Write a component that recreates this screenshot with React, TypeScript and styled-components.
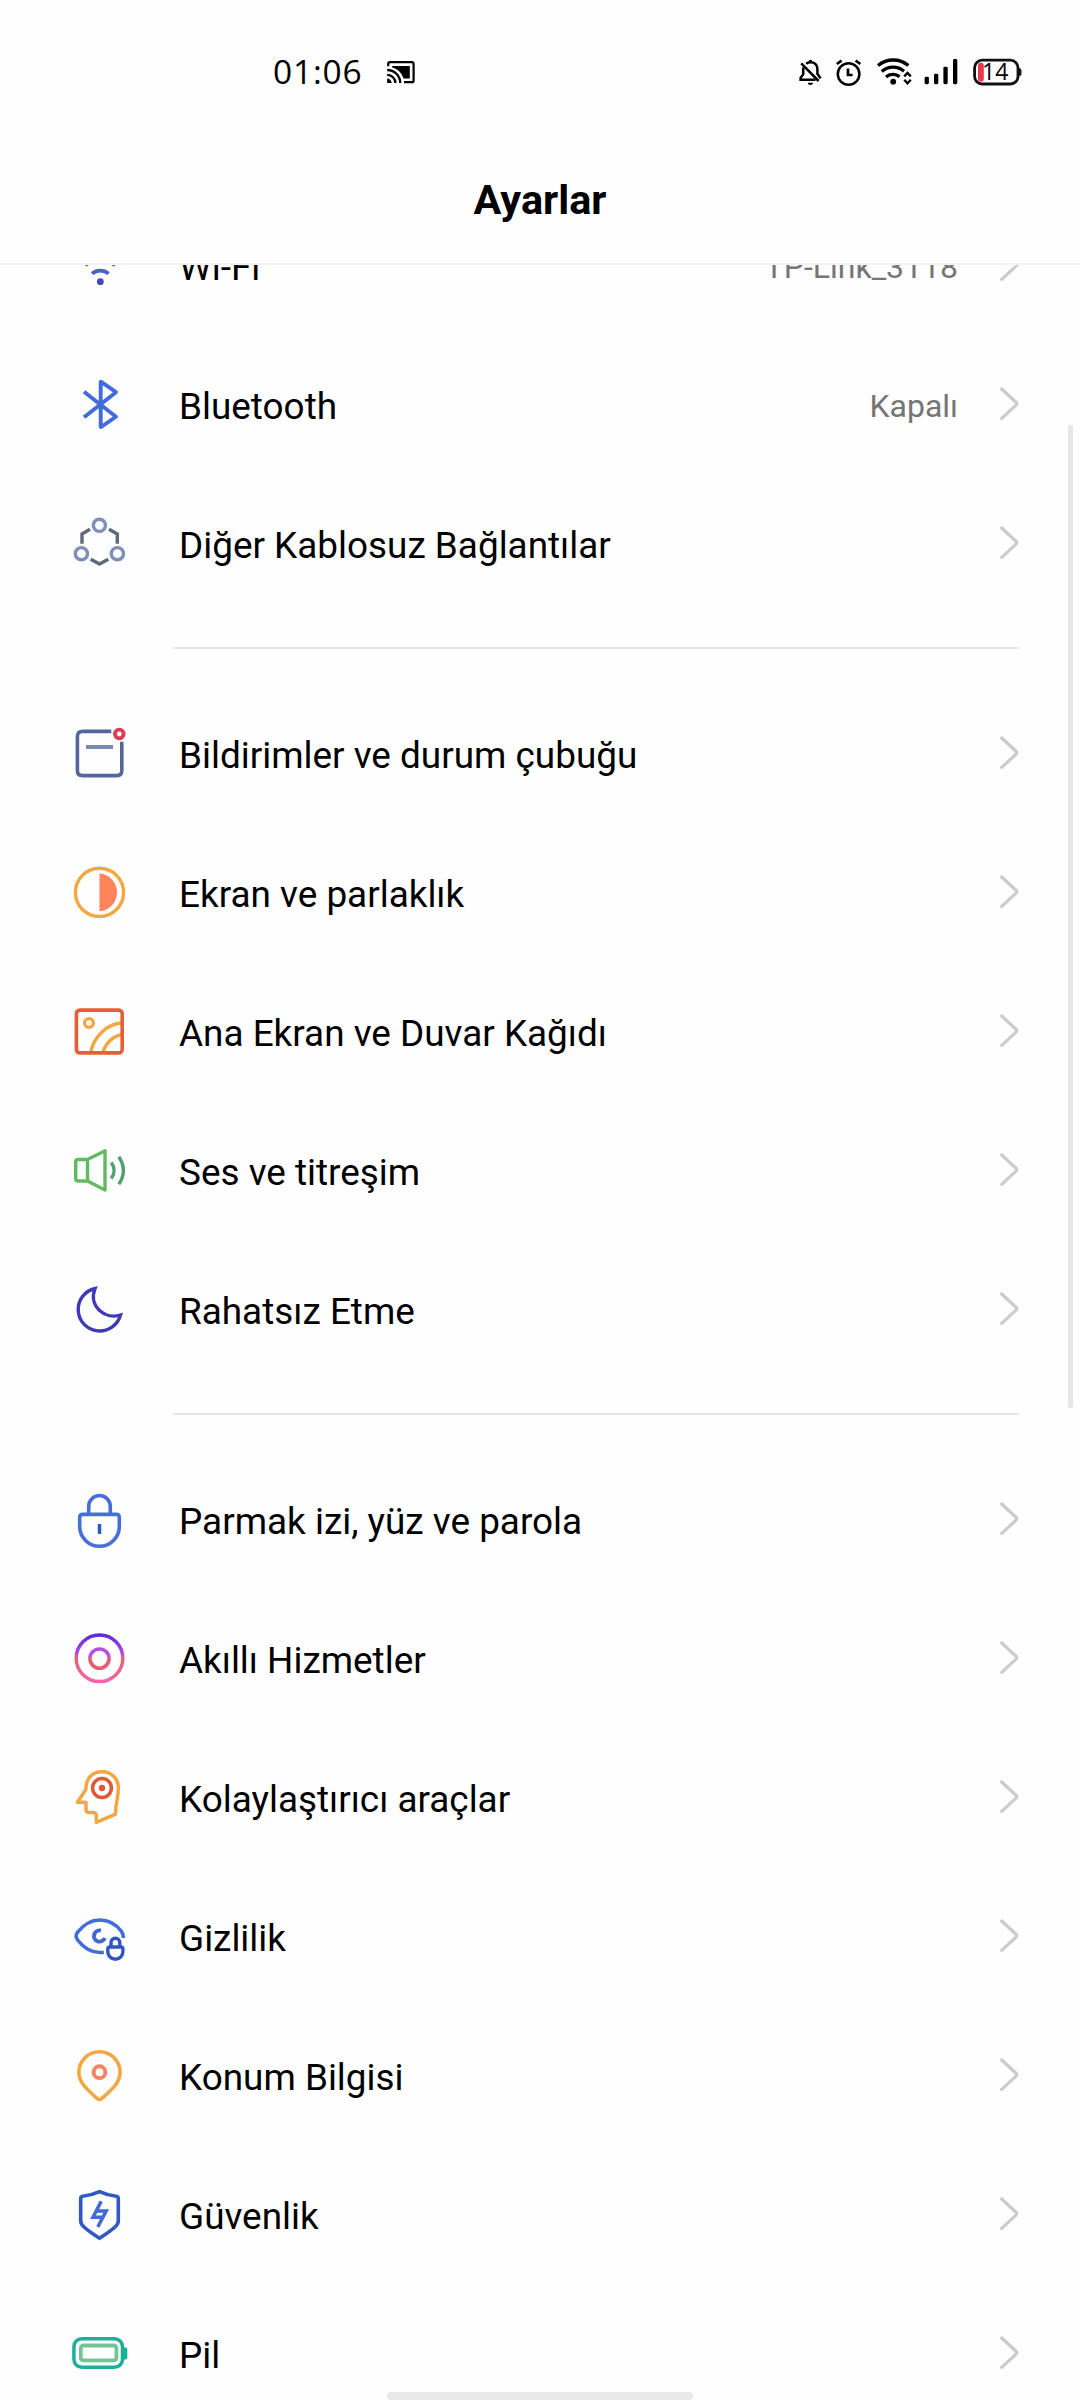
import React from "react";
import styled, { createGlobalStyle } from "styled-components";

const GlobalStyle = createGlobalStyle`
  html, body { margin: 0; padding: 0; background: #fefefe; }
  * { box-sizing: border-box; }
`;

const Screen = styled.div`
  position: relative;
  display: flex;
  flex-direction: column;
  width: 1080px;
  height: 2400px;
  overflow: hidden;
  background: #fefefe;
  color: #000;
  font-family: Roboto, "Noto Sans", sans-serif;
`;

const StatusBar = styled.div`
  flex: none;
  display: flex;
  align-items: center;
  height: 144px;
  padding: 0 58px 0 273px;
`;

const Clock = styled.div`
  width: 113px;
  padding-bottom: 2px;
  font-family: "Open Sans", "Noto Sans", sans-serif;
  font-size: 33.5px;
  letter-spacing: 0.8px;
  line-height: 40px;
`;

const StatusIcons = styled.div`
  display: flex;
  align-items: center;
  margin-left: auto;
`;

const StatusSvg = styled.svg<{ $gap?: number }>`
  display: block;
  flex: none;
  overflow: visible;
  margin-left: ${(p) => p.$gap ?? 0}px;
`;

const TitleBar = styled.header`
  flex: none;
  display: flex;
  justify-content: center;
  height: 121px;
  padding-top: 32px;
  border-bottom: 2px solid #f2f2f2;
`;

const Title = styled.h1`
  margin: 0;
  font-size: 41.4px;
  font-weight: 700;
  line-height: 49px;
`;

const Viewport = styled.main`
  flex: 1;
  min-height: 0;
  overflow: hidden;
`;

const List = styled.div`
  margin-top: -69px;
`;

const Row = styled.div`
  display: flex;
  align-items: center;
  height: 139px;
  padding: 0 61px 0 60px;
`;

const IconSvg = styled.svg`
  display: block;
  flex: none;
  width: 80px;
  height: 80px;
  margin: 0 39px 1px 0;
`;

const Label = styled.div`
  flex: 1;
  padding-top: 4px;
  font-size: 36.9px;
  line-height: 45px;
  white-space: nowrap;
`;

const Value = styled.div`
  padding-top: 2px;
  margin-right: 41px;
  color: #757575;
  font-size: 32px;
  line-height: 38px;
  white-space: nowrap;
`;

const ChevronSvg = styled.svg`
  display: block;
  flex: none;
  margin-bottom: 1px;
`;

const Divider = styled.hr`
  height: 2px;
  margin: 34px 61px 35px 173px;
  border: 0;
  background: #e5e5e5;
`;

const ScrollThumb = styled.div`
  position: absolute;
  top: 425px;
  right: 7px;
  width: 5px;
  height: 983px;
  border-radius: 2px;
  background: #e6e6e6;
`;

const HomeBar = styled.div`
  position: absolute;
  bottom: 0;
  left: 387px;
  width: 306px;
  height: 8px;
  border-radius: 4px;
  background: #e9e9e9;
`;

const Chevron = () => (
  <ChevronSvg width="20" height="40" viewBox="0 0 20 40" fill="none">
    <path d="M1.6 4 L17 18.2 Q18.4 19.7 17 21.2 L1.6 35.4" stroke="#cbcbcb" strokeWidth="3.2" />
  </ChevronSvg>
);

const icons: Record<string, React.ReactNode> = {
  wifi: (
    <>
      <path d="M18 31.5 A32 32 0 0 1 62 31.5" stroke="#4169dc" strokeWidth="3.4" />
      <path d="M25.5 40.5 A21.5 21.5 0 0 1 54.8 40.5" stroke="#4560d4" strokeWidth="3.4" />
      <path d="M32 48.6 A13 13 0 0 1 48.6 48.6" stroke="#4a5fd2" strokeWidth="3.8" />
      <circle cx="40.3" cy="56.7" r="3.4" fill="#4a45b8" />
    </>
  ),
  bluetooth: (
    <path
      d="M24 27.7 L56 52.7 L41.2 63 Q40.7 63.2 40.7 62.5 V18.3 Q40.7 17.6 41.2 17.9 L56 28.2 L24 53.3"
      stroke="#426bdd"
      strokeWidth="3.9"
      strokeLinejoin="round"
    />
  ),
  wireless: (
    <>
      <path
        d="M22 40.7 V31 L30 26.3 M49 26.3 L57.3 31 V40.7 M30.7 56.3 L39.5 61 L48.3 56.3"
        stroke="#5f6b78"
        strokeWidth="3.4"
      />
      <g stroke="#7e8eb8" strokeWidth="3.4">
        <circle cx="39.4" cy="22.3" r="6.1" />
        <circle cx="21.4" cy="50.7" r="6.1" />
        <circle cx="57.4" cy="50.7" r="6.1" />
      </g>
    </>
  ),
  notifications: (
    <>
      <path
        d="M51.3 18.4 H22.5 Q17.4 18.4 17.4 23.4 V57.5 Q17.4 62.6 22.5 62.6 H56.8 Q61.8 62.6 61.8 57.5 V28.7"
        stroke="#56669c"
        strokeWidth="3.6"
      />
      <path d="M26 34 H53" stroke="#7b89b6" strokeWidth="4" />
      <circle cx="59.3" cy="21" r="4.3" stroke="#de3c52" strokeWidth="3.8" />
    </>
  ),
  display: (
    <>
      <circle cx="39.5" cy="40.4" r="24.1" stroke="#f3a741" strokeWidth="3.4" />
      <path d="M39.5 21.6 A18.9 18.9 0 0 1 39.5 59.3 Z" fill="#ff845b" />
    </>
  ),
  wallpaper: (
    <>
      <path d="M30.6 62 C33.5 45.5 47 33 62 31.8 M42.6 62 C45.5 53 52 45.5 62 43.5" stroke="#f3a741" strokeWidth="3.4" />
      <circle cx="29" cy="32" r="4.4" stroke="#f3a741" strokeWidth="3.4" />
      <rect x="16.4" y="19.1" width="45.8" height="42.8" rx="3.5" stroke="#e65e34" strokeWidth="3.6" />
    </>
  ),
  sound: (
    <>
      <path
        d="M27.5 29.5 H18.2 Q15.7 29.5 15.7 32 V48.5 Q15.7 51 18.2 51 H27.5 Z L45 20.8 V60 L27.5 51"
        stroke="#61ba62"
        strokeWidth="3.4"
        strokeLinejoin="round"
      />
      <path d="M51.3 32.5 Q57 40.5 51.3 48.5 M58.8 26.7 Q68 40.5 58.8 54.3" stroke="#52a06f" strokeWidth="3.4" />
    </>
  ),
  moon: (
    <path
      d="M35 19.5 A21.5 21.5 0 1 0 60.5 46 C45 51 28 37 35 19.5 Z"
      stroke="#3f38bb"
      strokeWidth="3.4"
    />
  ),
  lock: (
    <>
      <g stroke="#456fd9" strokeWidth="3.6">
        <path d="M28.7 35 V27.3 A10.8 10.8 0 0 1 50.3 27.3 V35" />
        <path d="M22.7 35.4 H56.3 Q59.3 35.4 59.3 38.4 V47.4 A19.8 19.8 0 0 1 19.7 47.4 V38.4 Q19.7 35.4 22.7 35.4 Z" />
      </g>
      <path d="M39.5 45 V55" stroke="#2f58c0" strokeWidth="3.5" />
    </>
  ),
  smart: (
    <>
      <defs>
        <linearGradient id="smartOuter" gradientUnits="userSpaceOnUse" x1="0" y1="15" x2="0" y2="66">
          <stop offset="0" stopColor="#5428d6" />
          <stop offset="0.46" stopColor="#c54cec" />
          <stop offset="0.46" stopColor="#e2606f" />
          <stop offset="1" stopColor="#f367ae" />
        </linearGradient>
        <linearGradient id="smartInner" gradientUnits="userSpaceOnUse" x1="0" y1="29" x2="0" y2="52">
          <stop offset="0" stopColor="#b24ede" />
          <stop offset="0.42" stopColor="#c24fe6" />
          <stop offset="0.42" stopColor="#e2606f" />
          <stop offset="1" stopColor="#e2606f" />
        </linearGradient>
      </defs>
      <circle cx="39.5" cy="40.3" r="23.3" stroke="url(#smartOuter)" strokeWidth="3.5" />
      <circle cx="39.5" cy="40.6" r="9.6" stroke="url(#smartInner)" strokeWidth="3.6" />
    </>
  ),
  head: (
    <>
      <path
        d="M17.4 45.3 L25.3 33.5 Q26 32.3 26 30.8 C26 21.5 32.5 14.8 42 14.8 C51.8 14.8 58.4 21.8 58.4 31 C58.4 41 55.5 45 55.5 57.2 L36.3 65.4 V58.8 Q36.3 55.4 33 55.4 H29 Q26 55.4 26 52.4 V45.3 Z"
        stroke="#f3a741"
        strokeWidth="3.5"
        strokeLinejoin="round"
      />
      <circle cx="42" cy="31" r="9.4" stroke="#dd5b34" strokeWidth="3.5" />
      <circle cx="42" cy="31" r="3.2" fill="#dd5b34" />
    </>
  ),
  privacy: (
    <>
      <path
        d="M43.8 56.3 C33 57.6 24.5 53 17.6 44 Q14.6 40 17.6 36.2 C24 28.2 31 24 39.5 24 C49 24 56.5 28.5 61.5 35.5 Q63.4 38.3 63.4 42"
        stroke="#426bdd"
        strokeWidth="3.6"
      />
      <path d="M41 34.6 A5.6 5.6 0 1 0 44.8 42" stroke="#3f66d4" strokeWidth="3.9" />
      <g stroke="#3253c6" strokeWidth="3.4">
        <path d="M51 50.5 V46.6 A4.4 4.4 0 0 1 59.8 46.6 V50.5" />
        <path d="M49.8 51 H60.9 Q62.9 51 62.9 53 V55.7 A7.5 7.5 0 0 1 47.8 55.7 V53 Q47.8 51 49.8 51 Z" />
      </g>
    </>
  ),
  location: (
    <>
      <path
        d="M18.9 37.3 A20.6 20.6 0 0 1 60.1 37.3 C60.1 47.5 53 53.5 42 63.4 Q39.5 65.6 37 63.4 C26 53.5 18.9 47.5 18.9 37.3 Z"
        stroke="#f3a741"
        strokeWidth="3.6"
      />
      <circle cx="39.5" cy="37.2" r="5.9" stroke="#f4835f" strokeWidth="3.9" />
    </>
  ),
  security: (
    <>
      <path
        d="M39.5 17.7 Q47.5 21.5 56.3 22.2 Q58.3 22.6 58.3 24.6 V46.6 Q58.3 50 55.5 52.5 Q50.5 57.3 39.5 64.2 Q28.5 57.3 23.5 52.5 Q20.7 50 20.7 46.6 V24.6 Q20.7 22.6 22.7 22.2 Q31.5 21.5 39.5 17.7 Z"
        stroke="#3059c3"
        strokeWidth="3.6"
      />
      <path d="M41.2 27.4 L33 43.2 H43 M37.8 53 L46.2 36.9 H36.5" stroke="#4169d8" strokeWidth="3.5" />
    </>
  ),
  battery: (
    <>
      <rect x="62.5" y="34.4" width="4.8" height="12" rx="1.6" fill="#18b096" />
      <rect x="13.9" y="25.7" width="48.6" height="28.6" rx="8" stroke="#1bb099" strokeWidth="3.5" />
      <rect x="20.8" y="32.5" width="35.6" height="14.8" rx="2.6" stroke="#72c494" strokeWidth="3.8" />
    </>
  ),
};

type Item = { icon: string; label: string; value?: string };

const groups: Item[][] = [
  [
    { icon: "wifi", label: "Wi-Fi", value: "TP-Link_3118" },
    { icon: "bluetooth", label: "Bluetooth", value: "Kapalı" },
    { icon: "wireless", label: "Diğer Kablosuz Bağlantılar" },
  ],
  [
    { icon: "notifications", label: "Bildirimler ve durum çubuğu" },
    { icon: "display", label: "Ekran ve parlaklık" },
    { icon: "wallpaper", label: "Ana Ekran ve Duvar Kağıdı" },
    { icon: "sound", label: "Ses ve titreşim" },
    { icon: "moon", label: "Rahatsız Etme" },
  ],
  [
    { icon: "lock", label: "Parmak izi, yüz ve parola" },
    { icon: "smart", label: "Akıllı Hizmetler" },
    { icon: "head", label: "Kolaylaştırıcı araçlar" },
    { icon: "privacy", label: "Gizlilik" },
    { icon: "location", label: "Konum Bilgisi" },
    { icon: "security", label: "Güvenlik" },
    { icon: "battery", label: "Pil" },
  ],
];

const SettingRow = ({ icon, label, value }: Item) => (
  <Row>
    <IconSvg viewBox="0 0 80 80" fill="none">
      {icons[icon]}
    </IconSvg>
    <Label>{label}</Label>
    {value && <Value>{value}</Value>}
    <Chevron />
  </Row>
);

const CastIcon = () => (
  <StatusSvg width="30" height="30" viewBox="0 0 30 30" fill="none" stroke="#000">
    <path d="M2.2 9.3 V7 Q2.2 5.2 4 5.2 H25.8 Q27.6 5.2 27.6 7 V23.4 Q27.6 25.2 25.8 25.2 H18" strokeWidth="2.2" />
    <path d="M6.2 9 H23.8 V21.4 H17.6 Q14.5 12.6 6.2 10.6 Z" fill="#000" stroke="none" />
    <path d="M1.2 13 A13 13 0 0 1 14.2 26 M1.2 17.8 A8.2 8.2 0 0 1 9.4 26" strokeWidth="2.3" />
    <path d="M1.2 21.6 A4.5 4.5 0 0 1 5.7 26 H1.2 Z" fill="#000" stroke="none" />
  </StatusSvg>
);

const MutedBellIcon = () => (
  <StatusSvg width="25" height="30" viewBox="0 0 25 30" fill="none" stroke="#000">
    <path d="M8.2 6.8 Q10 5.2 12.4 5.2 C16.8 5.2 19.4 8.2 19.4 12.2 V16.8 L22.6 21.4" strokeWidth="2.5" />
    <path d="M5.4 10.4 Q5.2 11.3 5.2 12.4 V17.4 L2.6 20.8 V22.8 H17.5" strokeWidth="2.5" />
    <path d="M3.2 6.4 L20.6 24" strokeWidth="2.5" />
    <path d="M10.6 4.6 Q10.6 2.8 12.4 2.8 Q14.2 2.8 14.2 4.6 Z M9.6 25.8 H15.2 Q14.6 28 12.4 28 Q10.2 28 9.6 25.8 Z" fill="#000" stroke="none" />
  </StatusSvg>
);

const AlarmIcon = () => (
  <StatusSvg $gap={12} width="28" height="30" viewBox="0 0 28 30" fill="none" stroke="#000">
    <circle cx="13.6" cy="17" r="10.8" strokeWidth="2.5" />
    <path d="M13 11.4 V18 H17.6" strokeWidth="2.7" />
    <path d="M1.8 7 L6.6 3.6 M20.6 3.6 L25.4 7" strokeWidth="2.7" />
  </StatusSvg>
);

const WifiStatusIcon = () => (
  <StatusSvg $gap={13} width="38" height="30" viewBox="0 0 38 30" fill="none" stroke="#000">
    <path d="M2 8.6 A23.5 23.5 0 0 1 32.4 8.6" strokeWidth="3.3" />
    <path d="M5.8 14.4 A17 17 0 0 1 28 14.2" strokeWidth="3.3" />
    <path d="M10 20 A10.6 10.6 0 0 1 23.6 19.6" strokeWidth="3.3" />
    <circle cx="17.2" cy="24.7" r="2.9" fill="#000" stroke="none" />
    <path d="M28.2 19.4 L31.5 15.9 L34.8 19.4 M28.2 22.8 L31.5 26.3 L34.8 22.8" strokeWidth="2.3" />
  </StatusSvg>
);

const SignalIcon = () => (
  <StatusSvg $gap={9} width="35" height="30" viewBox="0 0 35 30">
    <rect x="1.6" y="19.8" width="4.3" height="7.4" rx="1.4" />
    <rect x="11" y="16.8" width="4.3" height="10.4" rx="1.4" />
    <rect x="20.4" y="9.8" width="4.3" height="17.4" rx="1.4" />
    <rect x="30" y="2" width="4.3" height="25.2" rx="1.4" />
  </StatusSvg>
);

const BatteryStatusIcon = () => (
  <StatusSvg $gap={14} width="50" height="30" viewBox="0 0 50 30" fill="none">
    <rect x="2.6" y="3.2" width="43.4" height="23.8" rx="7.5" stroke="#111" strokeWidth="2.8" />
    <path d="M47 11 Q49.4 11.4 49.4 13 V17.2 Q49.4 18.8 47 19.2 Z" fill="#111" />
    <rect x="6" y="5.8" width="5.8" height="18.8" rx="2.9" fill="#e9394d" />
    <text x="10" y="23.4" fill="#000" fontFamily="'Open Sans', 'Noto Sans', sans-serif" fontSize="23">
      14
    </text>
  </StatusSvg>
);

export default function App() {
  return (
    <Screen>
      <GlobalStyle />
      <StatusBar>
        <Clock>01:06</Clock>
        <CastIcon />
        <StatusIcons>
          <MutedBellIcon />
          <AlarmIcon />
          <WifiStatusIcon />
          <SignalIcon />
          <BatteryStatusIcon />
        </StatusIcons>
      </StatusBar>
      <TitleBar>
        <Title>Ayarlar</Title>
      </TitleBar>
      <Viewport>
        <List>
          {groups.map((items, index) => (
            <React.Fragment key={index}>
              {index > 0 && <Divider />}
              {items.map((item) => (
                <SettingRow key={item.label} {...item} />
              ))}
            </React.Fragment>
          ))}
        </List>
      </Viewport>
      <ScrollThumb />
      <HomeBar />
    </Screen>
  );
}
